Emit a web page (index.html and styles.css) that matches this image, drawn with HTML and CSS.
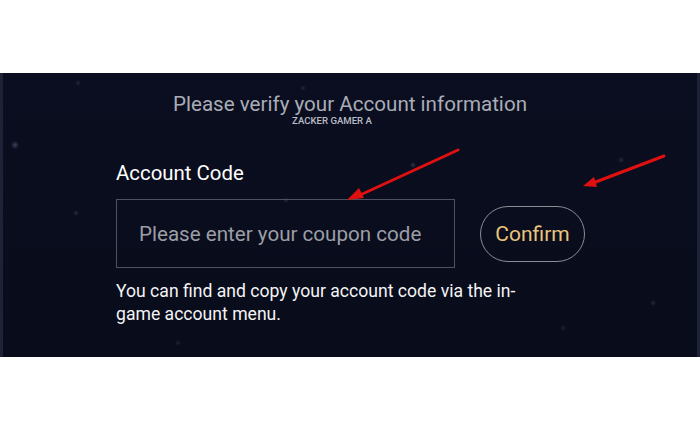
FILE: index.html
```html
<!DOCTYPE html>
<html>
<head>
<meta charset="utf-8">
<link rel="stylesheet" href="styles.css">
</head>
<body>
<div class="page">
  <section class="panel">
    <header class="head">
      <h1 class="title">Please verify your Account information</h1>
      <div class="sub">ZACKER GAMER A</div>
    </header>
    <div class="form">
      <label class="label">Account Code</label>
      <div class="row">
        <div class="input">Please enter your coupon code</div>
        <button class="confirm">Confirm</button>
      </div>
      <p class="help">You can find and copy your account code via the in-game account menu.</p>
    </div>
    <svg class="arrows" width="700" height="284" viewBox="0 0 700 284">
      <g stroke="#e01010" stroke-width="3" stroke-linecap="round" fill="none">
        <line x1="458" y1="77" x2="358" y2="123"/>
        <line x1="664" y1="83" x2="593" y2="110"/>
      </g>
      <g fill="#e01010">
        <polygon points="347,127 359,115 364,125"/>
        <polygon points="583,113 594,104 597,114"/>
      </g>
    </svg>
  </section>
</div>
</body>
</html>
```

FILE: styles.css
```css
html, body {
  margin: 0;
  padding: 0;
  background: #ffffff;
}
body {
  width: 700px;
  height: 430px;
  font-family: Roboto, "Liberation Sans", sans-serif;
}
.page {
  padding-top: 73px;
}
.panel {
  position: relative;
  height: 284px;
  box-sizing: border-box;
  border-left: 3px solid #1d2236;
  border-right: 3px solid #1d2236;
  background-color: #0a0d1d;
  background-image:
    radial-gradient(circle at 12px 72px, rgba(120,130,170,0.45) 0, rgba(120,130,170,0) 4px),
    radial-gradient(circle at 410px 92px, rgba(120,130,170,0.35) 0, rgba(120,130,170,0) 3px),
    radial-gradient(circle at 73px 140px, rgba(120,130,170,0.25) 0, rgba(120,130,170,0) 3px),
    radial-gradient(circle at 283px 127px, rgba(120,130,170,0.25) 0, rgba(120,130,170,0) 3px),
    radial-gradient(circle at 618px 87px, rgba(120,130,170,0.25) 0, rgba(120,130,170,0) 3px),
    radial-gradient(circle at 650px 230px, rgba(120,130,170,0.25) 0, rgba(120,130,170,0) 3px),
    radial-gradient(circle at 560px 255px, rgba(120,130,170,0.2) 0, rgba(120,130,170,0) 3px),
    radial-gradient(circle at 175px 270px, rgba(120,130,170,0.2) 0, rgba(120,130,170,0) 3px),
    radial-gradient(circle at 300px 15px, rgba(120,130,170,0.2) 0, rgba(120,130,170,0) 3px),
    radial-gradient(circle at 75px 10px, rgba(120,130,170,0.2) 0, rgba(120,130,170,0) 3px),
    linear-gradient(180deg, #0b0e20 0%, #090c1a 100%);
  overflow: hidden;
}
.head {
  display: flex;
  flex-direction: column;
  align-items: center;
  padding-top: 19px;
}
.title {
  margin: 0;
  font-weight: 400;
  font-size: 20.6px;
  line-height: 24px;
  color: #a9adb7;
}
.sub {
  font-size: 9.6px;
  line-height: 10px;
  font-weight: 500;
  color: #b8bcc4;
  margin-right: 36px;
}
.form {
  padding-left: 113px;
  padding-top: 35px;
}
.label {
  display: block;
  font-size: 20.4px;
  line-height: 24px;
  color: #ffffff;
}
.row {
  display: flex;
  align-items: center;
  margin-top: 14px;
}
.input {
  width: 339px;
  height: 69px;
  box-sizing: border-box;
  border: 1px solid #4e5160;
  padding-left: 22px;
  display: flex;
  align-items: center;
  font-size: 20.6px;
  color: #9c9ea6;
}
.confirm {
  margin-left: 25px;
  width: 105px;
  height: 56px;
  border-radius: 28px;
  border: 1px solid #8a8d96;
  background: transparent;
  color: #e9c47c;
  font-family: Roboto, "Liberation Sans", sans-serif;
  font-size: 21px;
  padding: 0;
}
.help {
  margin: 12px 0 0 0;
  width: 420px;
  font-size: 17.6px;
  line-height: 23px;
  color: #f4f4f6;
}
.arrows {
  position: absolute;
  left: -3px;
  top: 0;
  pointer-events: none;
}
```
